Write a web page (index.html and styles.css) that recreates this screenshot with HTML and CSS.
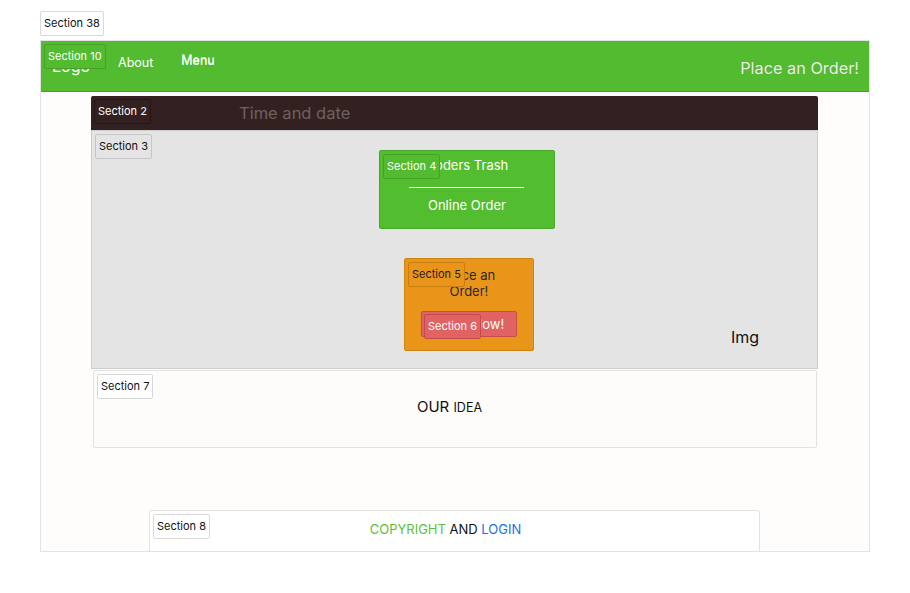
FILE: index.html
```html
<!DOCTYPE html>
<html>
<head>
<meta charset="utf-8">
<link rel="stylesheet" href="styles.css">
</head>
<body>
<div class="page">
  <div class="tag tag-plain">Section 38</div>
  <div class="frame">
    <header class="header">
      <span class="tag tag-green tag-corner">Section 10</span>
      <span class="logo">Logo</span>
      <nav class="nav">
        <span class="nav-about">About</span>
        <span class="nav-menu">Menu</span>
      </nav>
      <span class="header-order">Place an Order!</span>
    </header>

    <section class="bar">
      <span class="tag tag-dark tag-corner">Section 2</span>
      <span class="bar-time">Time and date</span>
    </section>

    <section class="hero">
      <span class="tag tag-gray tag-corner">Section 3</span>
      <div class="hero-col">
        <div class="brand">
          <span class="tag tag-green tag-corner">Section 4</span>
          <div class="brand-title">Coders Trash</div>
          <div class="brand-line"></div>
          <div class="brand-sub">Online Order</div>
        </div>
        <div class="order">
          <span class="tag tag-orange tag-corner">Section 5</span>
          <div class="order-text">Place an Order!</div>
          <div class="order-btn">
            <span class="tag tag-red tag-corner">Section 6</span>
            <span class="order-btn-text">Order Now!</span>
          </div>
        </div>
      </div>
      <div class="hero-img">Img</div>
    </section>

    <section class="idea">
      <span class="tag tag-plain tag-corner">Section 7</span>
      <div class="idea-text">OUR <small>IDEA</small></div>
    </section>

    <footer class="footer">
      <span class="tag tag-plain tag-corner">Section 8</span>
      <div class="footer-text"><span class="c-green">COPYRIGHT</span> AND <span class="c-blue">LOGIN</span></div>
    </footer>
  </div>
</div>
</body>
</html>
```

FILE: styles.css
```css
* { box-sizing: border-box; }
html, body { margin: 0; padding: 0; background: #ffffff; }
body {
  font-family: Inter, "Noto Sans", "Liberation Sans", sans-serif;
  color: #111;
}
.page {
  padding: 11px 0 0 40px;
  width: 910px;
}

/* section tags */
.tag {
  display: inline-block;
  height: 25px;
  line-height: 23px;
  padding: 0 3px;
  font-size: 11px;
  border: 1px solid #dcdcdc;
  border-radius: 2px;
  white-space: nowrap;
}
.tag-corner { position: absolute; top: 3px; left: 3px; z-index: 2; }
.tag-plain { background: #ffffff; color: #111; border-color: #d9d9d9; }
.tag-green { background: #53bb30; color: #fff; border-color: #46a226; }
.tag-dark { background: #332121; color: #fff; border-color: #251515; }
.tag-gray { background: #e4e4e4; color: #111; border-color: #c6c6c6; }
.tag-orange { background: #e9951a; color: #1c1c1c; border-color: #c97e10; }
.tag-red { background: #e06262; color: #fff; border-color: #c44b4b; }

.frame {
  position: relative;
  margin-top: 4px;
  width: 830px;
  height: 512px;
  border: 1px solid #e3e3e3;
  background: #fffcfc;
  overflow: hidden;
}

/* header */
.header {
  position: relative;
  margin: -1px -1px 0 -1px;
  height: 52px;
  background: #53bb30;
  border: 1px solid #46a226;
  border-radius: 2px;
  display: flex;
  align-items: center;
  color: #fff;
}
.logo {
  margin-left: 11px;
  margin-top: -1px;
  font-size: 16px;
}
.nav {
  display: flex;
  margin-left: 28px;
  gap: 28px;
  font-size: 12.5px;
  margin-top: -8px;
}
.nav-menu {
  text-shadow: 0 -1.5px 0 rgba(255,255,255,0.7);
  margin-top: -2px;
}
.header-order {
  margin-left: auto;
  margin-right: 10px;
  margin-top: 3px;
  font-size: 16.3px;
  color: #e6f2e0;
  text-shadow: 0 0 1px #6a8a5a;
}

/* section 2 bar */
.bar {
  position: relative;
  margin: 4px 0 0 50px;
  width: 727px;
  height: 34px;
  background: #332121;
  border-radius: 2px 2px 0 0;
  display: flex;
  align-items: center;
}
.bar-time {
  margin-left: 148px;
  font-size: 16.5px;
  color: #6c6262;
}

/* section 3 hero */
.hero {
  position: relative;
  margin-left: 50px;
  width: 727px;
  height: 239px;
  background: #e4e4e4;
  border: 1px solid #cdcdcd;
  display: flex;
  padding-left: 111px;
}
.hero-col {
  flex: 1;
  display: flex;
  flex-direction: column;
  align-items: center;
  padding-top: 19px;
}
.hero-img {
  align-self: flex-end;
  margin: 0 58px 21px 0;
  font-size: 16px;
  color: #111;
}

.brand {
  position: relative;
  width: 176px;
  height: 79px;
  background: #53bd30;
  border: 1px solid #47a728;
  border-radius: 2px;
  display: flex;
  flex-direction: column;
  align-items: center;
  color: #fff;
  font-size: 13px;
  padding-top: 5px;
}
.brand-title { line-height: 18px; }
.brand-line {
  width: 115px;
  height: 1px;
  margin-top: 13px;
  background: #ffffff;
}
.brand-sub { margin-top: 8px; line-height: 18px; }

.order {
  position: relative;
  margin-top: 29px;
  margin-left: 4px;
  width: 130px;
  height: 93px;
  background: #e9951a;
  border: 1px solid #d08412;
  border-radius: 2px;
  display: flex;
  flex-direction: column;
  align-items: center;
  padding: 8px 24px 0;
  color: #2a2a2a;
  font-size: 13px;
}
.order-text {
  text-align: center;
  line-height: 16px;
  width: 80px;
}
.order-btn {
  position: relative;
  margin-top: 12px;
  width: 96px;
  height: 26px;
  background: #e06262;
  border: 1px solid #c84c4c;
  border-radius: 2px;
  color: #fff;
  font-size: 13px;
  display: flex;
  align-items: center;
  justify-content: center;
  white-space: nowrap;
}
.order-btn .tag-corner { top: 2px; left: 2px; }

/* section 7 */
.idea {
  position: relative;
  margin: 1px 0 0 52px;
  width: 724px;
  height: 78px;
  background: #fdfcfb;
  border: 1px solid #e2e2e2;
  border-radius: 2px;
  display: flex;
  justify-content: center;
  padding-top: 26px;
  padding-right: 11px;
}
.idea-text { font-size: 15px; }
.idea-text small { font-size: 12.5px; }

/* section 8 */
.footer {
  position: relative;
  margin: 62px 0 0 108px;
  width: 611px;
  height: 50px;
  background: #ffffff;
  border: 1px solid #e2e2e2;
  border-radius: 2px;
  display: flex;
  justify-content: center;
  padding-top: 10px;
  padding-right: 18px;
}
.footer-text { font-size: 13px; color: #111; }
.c-green { color: #5cbf3c; }
.c-blue { color: #1a6fe8; }
```
